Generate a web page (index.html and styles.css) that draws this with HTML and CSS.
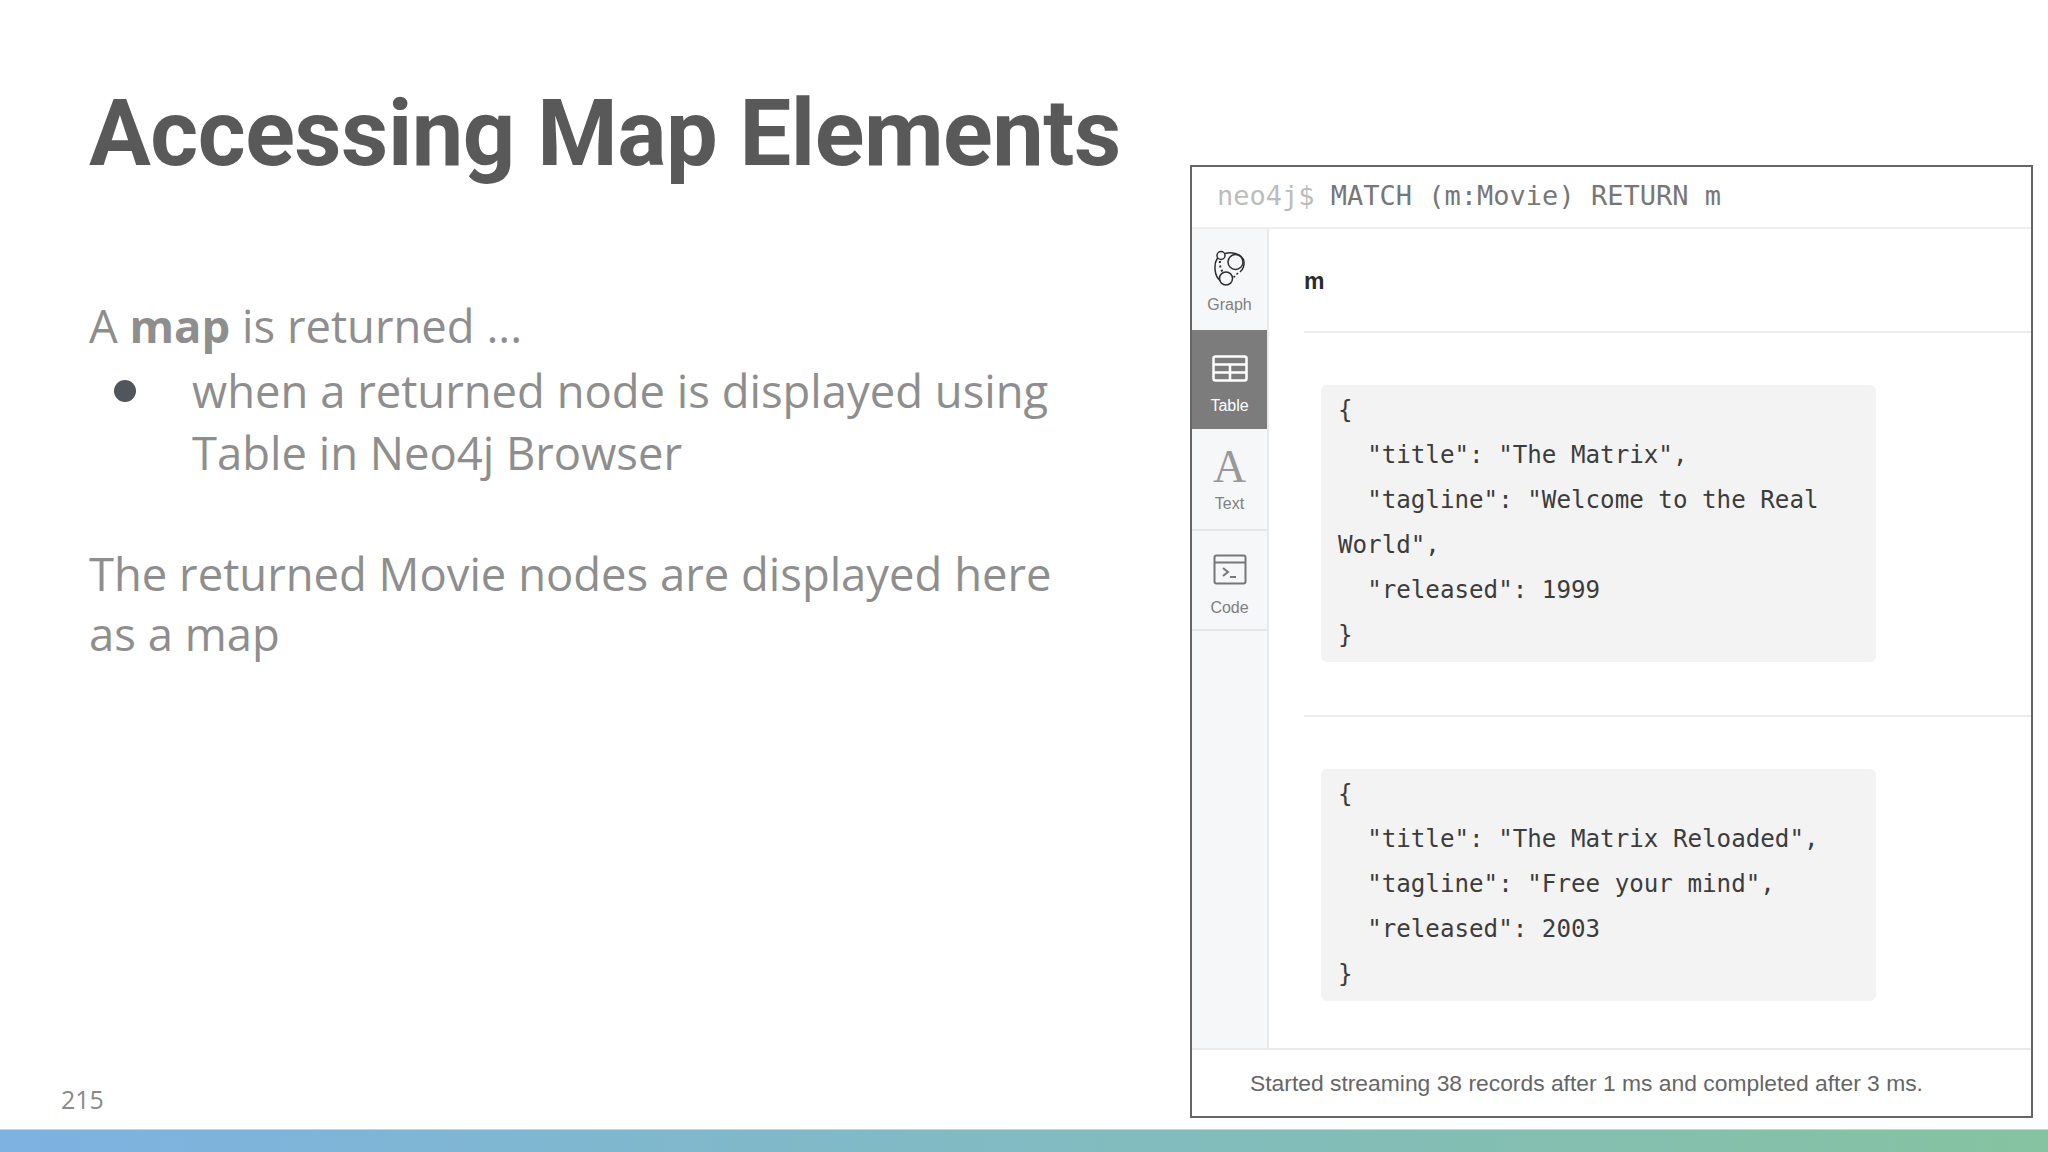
FILE: index.html
```html
<!DOCTYPE html>
<html lang="en">
<head>
<meta charset="utf-8">
<title>Accessing Map Elements</title>
<link rel="stylesheet" href="styles.css">
</head>
<body>
<div class="slide">
  <main class="main">
    <section class="left">
      <h1 class="title">Accessing Map Elements</h1>
      <p class="lead">A <b>map</b> is returned ...</p>
      <ul class="bullets">
        <li class="bullet"><span class="dot"></span><span class="bullet-text">when a returned node is displayed using Table in Neo4j Browser</span></li>
      </ul>
      <p class="para">The returned Movie nodes are displayed here as a map</p>
      <div class="page-num">215</div>
    </section>
    <section class="panel">
      <header class="prompt"><span class="prompt-label">neo4j$</span> MATCH (m:Movie) RETURN m</header>
      <div class="panel-body">
        <nav class="side">
          <div class="tab tab-graph">
            <svg class="icon" width="32" height="36" viewBox="0 0 32 36" fill="none" stroke="#2f2f2f" stroke-width="1.5">
              <circle cx="7" cy="5.5" r="4"/>
              <circle cx="21.5" cy="12" r="7.5"/>
              <circle cx="12" cy="28.5" r="6.5"/>
              <path d="M11 3.5 C17 2 26 3 29.5 9.5 C31 15 29 20 26 22"/>
              <path d="M24 23 C22 25 20 27 18.5 28.5" stroke-dasharray="2 2"/>
              <path d="M6.5 31 C0 26 -0.5 14 3.5 8"/>
              <path d="M6 11 C5.5 15 6.5 19 9 22.5" stroke-dasharray="2 2.5" stroke-width="2"/>
            </svg>
            <span class="tab-label">Graph</span>
          </div>
          <div class="tab tab-active">
            <svg class="icon" width="36" height="27" viewBox="0 0 36 27" fill="none" stroke="#fff" stroke-width="2.5">
              <rect x="1.5" y="1.5" width="33" height="24" rx="2"/>
              <path d="M1.5 9.5H34.5M1.5 17.5H34.5M18 9.5V25.5"/>
            </svg>
            <span class="tab-label">Table</span>
          </div>
          <div class="tab tab-text">
            <span class="glyph-a">A</span>
            <span class="tab-label">Text</span>
          </div>
          <div class="tab tab-code">
            <svg class="icon" width="34" height="32" viewBox="0 0 34 32" fill="none" stroke="#777" stroke-width="2">
              <rect x="1.5" y="1.5" width="31" height="28" rx="2"/>
              <path d="M1.5 8.5H32.5"/>
              <path d="M10 14l5 4-5 4M17 23h6"/>
            </svg>
            <span class="tab-label">Code</span>
          </div>
        </nav>
        <div class="content">
          <div class="col-head">m</div>
          <div class="row">
<pre class="code">{
  "title": "The Matrix",
  "tagline": "Welcome to the Real World",
  "released": 1999
}</pre>
          </div>
          <div class="row">
<pre class="code">{
  "title": "The Matrix Reloaded",
  "tagline": "Free your mind",
  "released": 2003
}</pre>
          </div>
        </div>
      </div>
      <footer class="status">Started streaming 38 records after 1 ms and completed after 3 ms.</footer>
    </section>
  </main>
  <div class="bar"></div>
</div>
</body>
</html>
```
FILE: styles.css
```css
* { box-sizing: border-box; }
html, body { margin: 0; padding: 0; background: #fff; }
.slide { width: 2048px; height: 1152px; display: flex; flex-direction: column; overflow: hidden; }
.main { flex: 1; min-height: 0; display: flex; padding: 0 15px 11px 61px; }

.left { width: 1129px; display: flex; flex-direction: column; font-family: "Open Sans", sans-serif; color: #8e8e8e; font-size: 45.4px; line-height: 62px; }
.title { margin: 83px 0 0 28px; font-family: Roboto, sans-serif; font-weight: 700; font-size: 92px; line-height: 102px; color: #595959; white-space: nowrap; letter-spacing: -0.5px; }
.lead { margin: 109px 0 0 28px; }
.lead b { font-weight: 700; }
.bullets { list-style: none; margin: 4px 0 0 28px; padding: 0; line-height: 61.5px; }
.bullet { display: flex; align-items: flex-start; }
.dot { flex: none; width: 22px; height: 22px; margin: 20px 0 0 25px; border-radius: 50%; background: #50565c; }
.bullet-text { margin-left: 56px; width: 880px; }
.para { margin: 60px 0 0 28px; width: 1010px; line-height: 60px; }
.page-num { margin-top: auto; margin-bottom: 2px; font-size: 25px; line-height: 34px; color: #8a8a8a; }

.panel { flex: 1; margin-top: 165px; display: flex; flex-direction: column; border: 2px solid #666; background: #fff; }
.prompt { height: 62px; flex: none; padding-left: 25px; font-family: "DejaVu Sans Mono", monospace; font-size: 27px; line-height: 58px; color: #777; border-bottom: 2px solid #efefef; white-space: pre; }
.prompt-label { color: #bcbcbc; }
.panel-body { flex: 1; min-height: 0; display: flex; }

.side { width: 77px; flex: none; background: #f6f7f8; border-right: 2px solid #e8e9ea; font-family: "Liberation Sans", sans-serif; }
.tab { display: flex; flex-direction: column; align-items: center; color: #808080; border-bottom: 2px solid #e6e7e8; }
.tab-graph { height: 101px; padding-top: 21px; border-bottom: 0; }
.tab-active { height: 99px; padding-top: 25px; background: #7c7c7c; color: #fff; border-bottom: 0; width: 75px; }
.tab-text { height: 102px; padding-top: 16px; }
.tab-code { height: 100px; padding-top: 23px; }
.icon { display: block; flex: none; }
.tab-label { font-size: 16px; line-height: 20px; }
.tab-graph .tab-label { margin-top: 9px; }
.tab-active .tab-label { margin-top: 14px; }
.tab-code .tab-label { margin-top: 12px; }
.glyph-a { font-family: "Liberation Serif", serif; font-size: 46px; line-height: 44px; color: #999; font-weight: 400; }
.tab-text .tab-label { margin-top: 5px; }

.content { flex: 1; min-width: 0; padding-left: 35px; }
.col-head { height: 104px; padding-top: 37px; font-family: "Liberation Sans", sans-serif; font-weight: 700; font-size: 23px; line-height: 30px; color: #2b2b2b; border-bottom: 2px solid #ececec; }
.row { padding: 52px 0 53px 17px; }
.row + .row { border-top: 2px solid #ececec; }
.code { margin: 0; width: 555px; padding: 3px 16px 4px 17px; border-radius: 6px; background: #f3f3f3; font-family: "DejaVu Sans Mono", monospace; font-size: 24.2px; line-height: 45px; color: #3c3c3c; white-space: pre-wrap; }

.status { height: 68px; flex: none; padding: 16px 0 0 58px; border-top: 2px solid #eaeaea; font-family: "Liberation Sans", sans-serif; font-size: 22.85px; line-height: 34px; color: #666; white-space: nowrap; }

.bar { flex: none; height: 23px; border-top: 1px solid #c9d4d8; background: linear-gradient(90deg, #7db2e2 0%, #86c3a1 100%); }
```
